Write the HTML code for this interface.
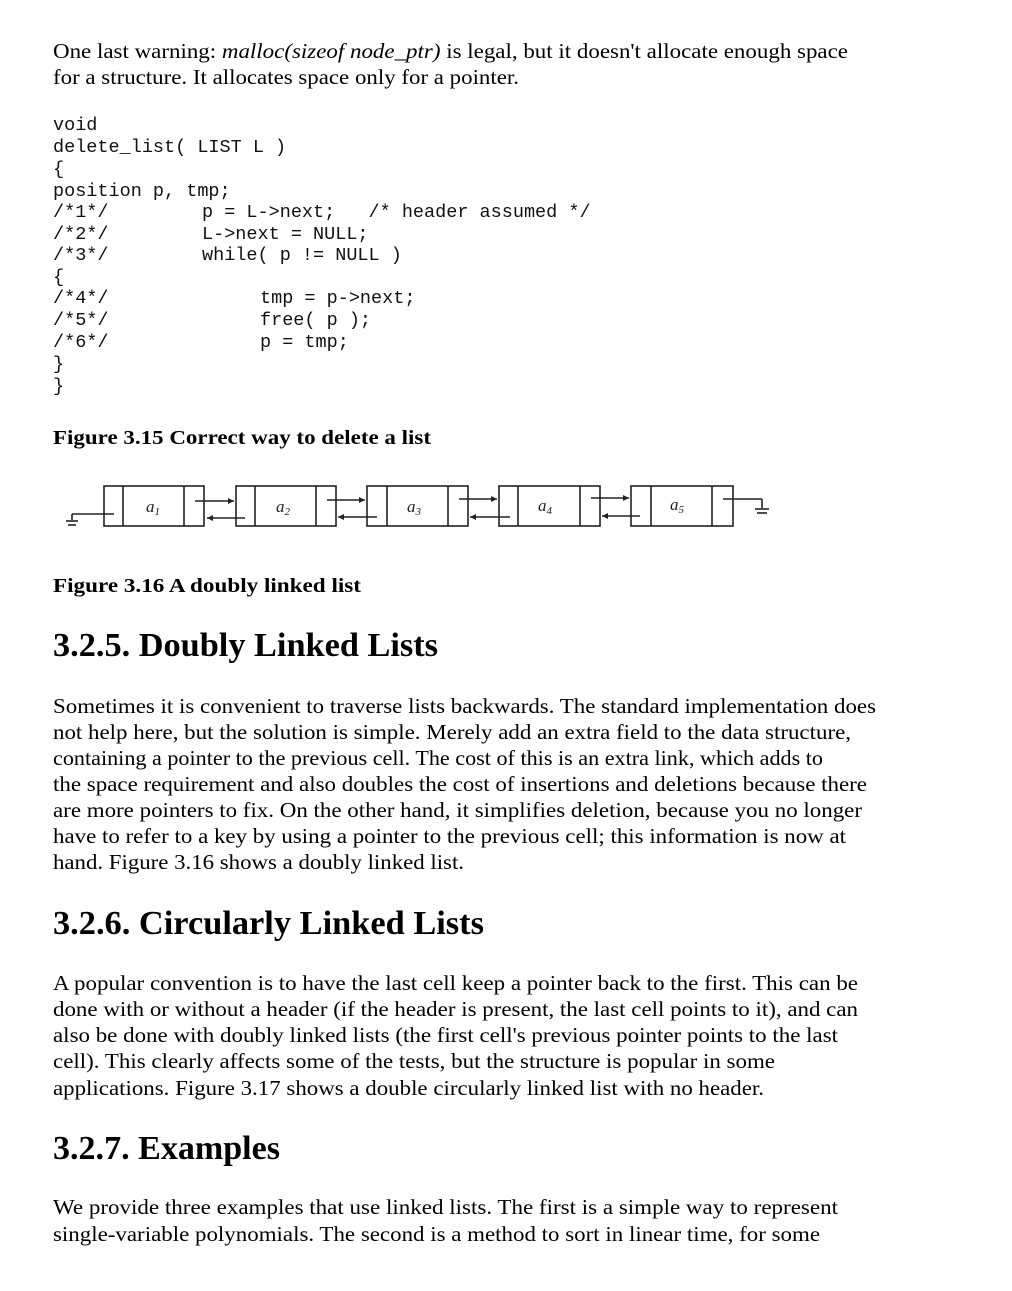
<!DOCTYPE html>
<html><head><meta charset="utf-8">
<style>
html,body{margin:0;padding:0;background:#fff;}
body{width:1012px;height:1291px;position:relative;overflow:hidden;color:#000;font-family:"Liberation Serif",serif;}
.l{position:absolute;left:53px;white-space:nowrap;font-size:21px;line-height:26px;transform-origin:0 0;}
.h{font-size:34px;font-weight:bold;line-height:40px;}
.c{font-weight:bold;font-size:20px;}
.m{position:absolute;white-space:nowrap;font-family:"Liberation Mono",monospace;font-size:18.5px;line-height:22px;color:#111;}
</style></head><body>
<div class="l" style="top:38px">One last warning: <i>malloc(sizeof node_ptr)</i> is legal, but it doesn't allocate enough space</div>
<div class="l" style="top:64px">for a structure. It allocates space only for a pointer.</div>

<div class="m" style="left:53px;top:115px">void</div>
<div class="m" style="left:53px;top:137px">delete_list( LIST L )</div>
<div class="m" style="left:53px;top:159px">{</div>
<div class="m" style="left:53px;top:181px">position p, tmp;</div>
<div class="m" style="left:53px;top:202px">/*1*/</div><div class="m" style="left:202px;top:202px">p = L-&gt;next;&nbsp;&nbsp;&nbsp;/* header assumed */</div>
<div class="m" style="left:53px;top:224px">/*2*/</div><div class="m" style="left:202px;top:224px">L-&gt;next = NULL;</div>
<div class="m" style="left:53px;top:245px">/*3*/</div><div class="m" style="left:202px;top:245px">while( p != NULL )</div>
<div class="m" style="left:53px;top:267px">{</div>
<div class="m" style="left:53px;top:288px">/*4*/</div><div class="m" style="left:260px;top:288px">tmp = p-&gt;next;</div>
<div class="m" style="left:53px;top:310px">/*5*/</div><div class="m" style="left:260px;top:310px">free( p );</div>
<div class="m" style="left:53px;top:332px">/*6*/</div><div class="m" style="left:260px;top:332px">p = tmp;</div>
<div class="m" style="left:53px;top:354px">}</div>
<div class="m" style="left:53px;top:376px">}</div>

<div class="l c" style="top:425px">Figure 3.15 Correct way to delete a list</div>

<svg style="position:absolute;left:0;top:0" width="1012" height="560">
<g stroke="#222" stroke-width="1.6" fill="none">
<rect x="104" y="486" width="100" height="40"/><line x1="123" y1="486" x2="123" y2="526"/><line x1="184" y1="486" x2="184" y2="526"/>
<rect x="236" y="486" width="100" height="40"/><line x1="255" y1="486" x2="255" y2="526"/><line x1="316" y1="486" x2="316" y2="526"/>
<rect x="367" y="486" width="101" height="40"/><line x1="387" y1="486" x2="387" y2="526"/><line x1="448" y1="486" x2="448" y2="526"/>
<rect x="499" y="486" width="101" height="40"/><line x1="518" y1="486" x2="518" y2="526"/><line x1="580" y1="486" x2="580" y2="526"/>
<rect x="631" y="486" width="102" height="40"/><line x1="651" y1="486" x2="651" y2="526"/><line x1="712" y1="486" x2="712" y2="526"/>
<line x1="195" y1="501" x2="234" y2="501"/><line x1="207" y1="518" x2="245" y2="518"/>
<line x1="327" y1="500" x2="365" y2="500"/><line x1="338" y1="517" x2="377" y2="517"/>
<line x1="459" y1="499" x2="497" y2="499"/><line x1="470" y1="517" x2="510" y2="517"/>
<line x1="591" y1="498" x2="629" y2="498"/><line x1="602" y1="516" x2="640" y2="516"/>
<line x1="723" y1="499" x2="762" y2="499"/><line x1="762" y1="499" x2="762" y2="508"/><line x1="755" y1="509" x2="769" y2="509"/><line x1="757" y1="513" x2="767" y2="513"/>
<line x1="72" y1="514" x2="114" y2="514"/><line x1="72" y1="514" x2="72" y2="520"/><line x1="66" y1="521" x2="78" y2="521"/><line x1="68" y1="525" x2="76" y2="525"/>
</g>
<g fill="#222">
<polygon points="234,501 228,498 228,504"/><polygon points="207,518 213,515 213,521"/>
<polygon points="365,500 359,497 359,503"/><polygon points="338,517 344,514 344,520"/>
<polygon points="497,499 491,496 491,502"/><polygon points="470,517 476,514 476,520"/>
<polygon points="629,498 623,495 623,501"/><polygon points="602,516 608,513 608,519"/>
</g>
<g font-family="Liberation Serif,serif" font-style="italic" font-size="17" fill="#222">
<text x="146" y="512">a<tspan font-size="11" dy="3">1</tspan></text>
<text x="276" y="512">a<tspan font-size="11" dy="3">2</tspan></text>
<text x="407" y="512">a<tspan font-size="11" dy="3">3</tspan></text>
<text x="538" y="511">a<tspan font-size="11" dy="3">4</tspan></text>
<text x="670" y="510">a<tspan font-size="11" dy="3">5</tspan></text>
</g>
</svg>

<div class="l c" style="top:573px">Figure 3.16 A doubly linked list</div>

<div class="l h" style="top:626px">3.2.5. Doubly Linked Lists</div>
<div class="l" style="top:693px">Sometimes it is convenient to traverse lists backwards. The standard implementation does</div>
<div class="l" style="top:719px">not help here, but the solution is simple. Merely add an extra field to the data structure,</div>
<div class="l" style="top:745px">containing a pointer to the previous cell. The cost of this is an extra link, which adds to</div>
<div class="l" style="top:771px">the space requirement and also doubles the cost of insertions and deletions because there</div>
<div class="l" style="top:797px">are more pointers to fix. On the other hand, it simplifies deletion, because you no longer</div>
<div class="l" style="top:823px">have to refer to a key by using a pointer to the previous cell; this information is now at</div>
<div class="l" style="top:849px">hand. Figure 3.16 shows a doubly linked list.</div>

<div class="l h" style="top:904px">3.2.6. Circularly Linked Lists</div>
<div class="l" style="top:970px">A popular convention is to have the last cell keep a pointer back to the first. This can be</div>
<div class="l" style="top:996px">done with or without a header (if the header is present, the last cell points to it), and can</div>
<div class="l" style="top:1022px">also be done with doubly linked lists (the first cell's previous pointer points to the last</div>
<div class="l" style="top:1048px">cell). This clearly affects some of the tests, but the structure is popular in some</div>
<div class="l" style="top:1075px">applications. Figure 3.17 shows a double circularly linked list with no header.</div>

<div class="l h" style="top:1129px">3.2.7. Examples</div>
<div class="l" style="top:1194px">We provide three examples that use linked lists. The first is a simple way to represent</div>
<div class="l" style="top:1221px">single-variable polynomials. The second is a method to sort in linear time, for some</div>

<script>
var W=[848,519,431,361,438,876,851,823,867,862,846,464,484,858,858,838,775,764,280,838,820];
var els=document.querySelectorAll('.l');
for(var i=0;i<els.length&&i<W.length;i++){var e=els[i];var w=e.getBoundingClientRect().width;if(w>0){e.style.transform='scaleX('+((W[i]-53)/w)+')';}}
</script>
</body></html>
